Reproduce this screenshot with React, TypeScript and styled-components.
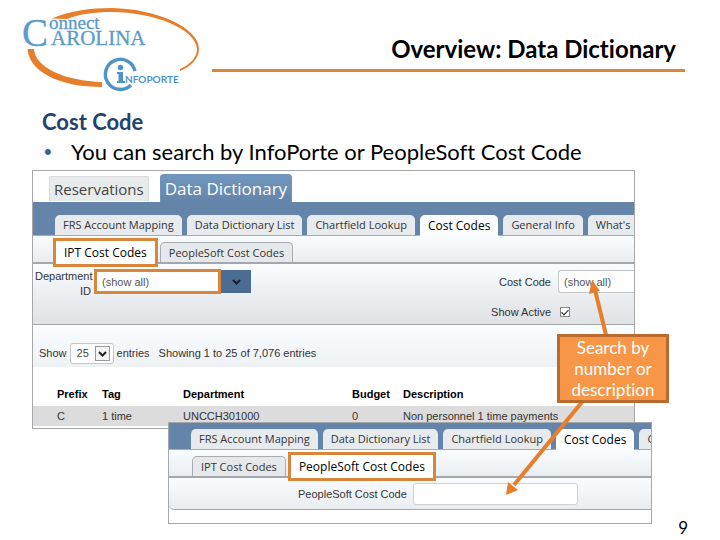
import React from "react";
import styled, { createGlobalStyle } from "styled-components";

const GlobalStyle = createGlobalStyle`
  * { box-sizing: border-box; }
  body {
    margin: 0;
    background: #fff;
    color: #000;
    font-family: Lato, "Liberation Sans", sans-serif;
    font-variant-ligatures: none;
  }
  button, input, select { font-family: inherit; }
`;

const ui = `"Liberation Sans", Arial, sans-serif`;
const tabFont = `"Open Sans", "Noto Sans", sans-serif`;
const orange = "#d9863a";
const steel = "#6484aa";

const Slide = styled.main`
  display: flex;
  flex-direction: column;
  min-height: 100vh;
  overflow: hidden;
`;

const Header = styled.header`
  display: flex;
  align-items: flex-start;
  padding: 0 35px 0 15px;
`;

const Logo = styled.svg`
  flex: none;
  width: 197px;
  height: 100px;
`;

const Title = styled.h1`
  flex: 1;
  margin: 32px 0 0;
  padding: 0 9px 3px 0;
  border-bottom: 3px solid ${orange};
  font-size: 24px;
  line-height: 34px;
  text-align: right;
  white-space: nowrap;
`;

const Intro = styled.section`
  padding: 7px 42px 4px;
  font-size: 22px;
  line-height: 30px;
`;

const Topic = styled.h2`
  margin: 0;
  font-size: 22px;
  line-height: 30px;
  color: #24426f;
`;

const Points = styled.ul`
  margin: 0;
  padding: 0;
  list-style: none;
  white-space: nowrap;
`;

const Point = styled.li`
  display: flex;
  &::before {
    content: "•";
    width: 27px;
    padding-left: 2px;
    color: #3c648c;
    font-family: ${ui};
  }
`;

const Stage = styled.section`
  position: relative;
  margin-top: -1px;
`;

const Shot = styled.section`
  position: relative;
  border: 1px solid #a6a8ac;
  background: #fff;
  overflow: hidden;
  font-family: ${ui};
  font-size: 11px;
  color: #333;
`;

const DictionaryShot = styled(Shot)`
  margin: 0 85px 0 32px;
  height: 259px;
`;

const PeopleSoftShot = styled(Shot)`
  margin: -7px 68px 0 168px;
  height: 102px;
`;

const ModuleTabs = styled.nav`
  display: flex;
  align-items: flex-end;
  gap: 11px;
  height: 31px;
  padding-left: 16px;
`;

const ModuleTab = styled.button<{ $active?: boolean }>`
  height: ${(p) => (p.$active ? 28 : 25)}px;
  margin-bottom: ${(p) => (p.$active ? 0 : 1)}px;
  padding: 0 4px;
  border: 1px solid ${(p) => (p.$active ? "#6f93b7" : "#d8dadc")};
  border-bottom: 0;
  border-radius: ${(p) => (p.$active ? "4px 4px 0 0" : "2px 2px 0 0")};
  background: ${(p) => (p.$active ? "linear-gradient(#7098be, #6484aa)" : "#e8ebec")};
  color: ${(p) => (p.$active ? "#fff" : "#444")};
  font-family: ${tabFont};
  font-size: ${(p) => (p.$active ? 17 : 15)}px;
  line-height: 24px;
  white-space: nowrap;
`;

const Band = styled.nav<{ $top: number }>`
  display: flex;
  gap: 5px;
  padding: ${(p) => p.$top}px 0 0 22px;
  background: ${steel};
  border-bottom: 1px solid #a6adb6;
`;

const Tab = styled.button<{ $active?: boolean }>`
  flex: none;
  height: ${(p) => (p.$active ? 21 : 20)}px;
  margin-bottom: ${(p) => (p.$active ? -1 : 0)}px;
  padding: 0 8px;
  border: 0;
  border-radius: 5px 5px 0 0;
  background: ${(p) => (p.$active ? "#fbfdff" : "#e7ebee")};
  color: ${(p) => (p.$active ? "#000" : "#333")};
  font-family: ${tabFont};
  font-size: ${(p) => (p.$active ? 12 : 11)}px;
  line-height: 20px;
  white-space: nowrap;
`;

const SubTabs = styled.nav<{ $inset: number }>`
  display: flex;
  align-items: flex-end;
  gap: 2px;
  height: 28px;
  padding-left: ${(p) => p.$inset}px;
  border-bottom: 2px solid #a4a8ad;
  background: linear-gradient(#fafdff, #e9edf0);
`;

const SubTab = styled.button<{ $marked?: boolean }>`
  position: relative;
  z-index: ${(p) => (p.$marked ? 1 : 0)};
  flex: none;
  height: ${(p) => (p.$marked ? 29 : 20)}px;
  margin-bottom: ${(p) => (p.$marked ? -5 : 0)}px;
  padding: 0 8px;
  border: ${(p) => (p.$marked ? `3px solid ${orange}` : "1px solid #a6adb3")};
  border-bottom-width: ${(p) => (p.$marked ? 3 : 0)}px;
  border-radius: ${(p) => (p.$marked ? "0" : "5px 5px 0 0")};
  background: ${(p) => (p.$marked ? "#fff" : "#e6e9eb")};
  color: ${(p) => (p.$marked ? "#000" : "#333")};
  font-family: ${tabFont};
  font-size: ${(p) => (p.$marked ? 12 : 11)}px;
  line-height: 20px;
  white-space: nowrap;
`;

const Filters = styled.form`
  display: flex;
  justify-content: space-between;
  height: 61px;
  padding: 5px 0 0 2px;
  border-bottom: 1px solid #a4a8ad;
  background: linear-gradient(#fafdff, #dfe1e4);
`;

const Department = styled.div`
  display: flex;
  align-items: flex-start;
`;

const DepartmentLabel = styled.label`
  width: 56px;
  margin-right: 3px;
  line-height: 15px;
  text-align: right;
`;

const DepartmentInput = styled.input`
  width: 127px;
  height: 25px;
  padding: 0 5px;
  border: 3px solid ${orange};
  background: #fff;
  color: #555;
  font-size: 11px;
`;

const DropButton = styled.button`
  display: grid;
  place-items: center;
  width: 30px;
  height: 23px;
  margin-top: 1px;
  padding: 0;
  border: 0;
  background: #4c6d93;
`;

const CodeFields = styled.div`
  display: grid;
  grid-template-columns: auto 76px;
  grid-template-rows: 23px 20px;
  align-items: center;
  align-content: start;
  gap: 9px 7px;
  padding-top: 1px;
  text-align: right;
`;

const CodeInput = styled.input`
  width: 100%;
  height: 23px;
  padding: 0 5px;
  border: 1px solid #c4c7ca;
  border-right: 0;
  border-radius: 3px 0 0 3px;
  background: #fff;
  color: #555;
  font-size: 11px;
`;

const Check = styled.input`
  appearance: none;
  width: 10px;
  height: 10px;
  margin: 0 0 0 2px;
  border: 1px solid #888;
  background: #fff;
  display: grid;
  place-items: center;
  &:checked::after {
    content: "";
    width: 3px;
    height: 6px;
    margin-bottom: 2px;
    border: solid #222;
    border-width: 0 1px 1px 0;
    transform: rotate(45deg);
  }
`;

const Paging = styled.div`
  display: flex;
  align-items: center;
  gap: 3px;
  height: 42px;
  padding: 14px 0 0 6px;
  background: linear-gradient(#fafdff, #eff2f5);
`;

const SelectBox = styled.span`
  position: relative;
  display: inline-flex;
`;

const PageSize = styled.select`
  appearance: none;
  width: 44px;
  height: 21px;
  padding: 0 6px;
  border: 1px solid #c4c7ca;
  border-radius: 3px;
  background: #fff;
  color: #444;
  font-size: 11px;
`;

const SelectArrow = styled.svg`
  position: absolute;
  right: 4px;
  top: 3px;
  width: 15px;
  height: 15px;
  pointer-events: none;
`;

const Summary = styled.span`
  margin-left: 6px;
`;

const Entries = styled.table`
  width: 100%;
  margin-top: 15px;
  border-collapse: collapse;
  table-layout: fixed;
  white-space: nowrap;
`;

const Head = styled.th<{ $w?: number }>`
  width: ${(p) => (p.$w ? `${p.$w}px` : "auto")};
  height: 24px;
  padding: 0;
  color: #000;
  text-align: left;
`;

const Cell = styled.td`
  height: 20px;
  padding: 0;
  background: #dcdcdc;
`;

const SoftForm = styled.form`
  display: flex;
  align-items: center;
  gap: 6px;
  height: 32px;
  padding-left: 129px;
  border-bottom: 1px solid #a4a8ad;
  border-radius: 5px 0 0 5px;
  background: linear-gradient(#fafdff, #e9edf0);
`;

const SoftInput = styled.input`
  width: 165px;
  height: 22px;
  padding: 0 5px;
  border: 1px solid #cfd2d5;
  border-radius: 3px;
  background: #fff;
`;

const Pointers = styled.svg`
  position: absolute;
  top: 110px;
  right: 51px;
  width: 169px;
  height: 218px;
  pointer-events: none;
`;

const Callout = styled.aside`
  position: absolute;
  top: 164px;
  right: 51px;
  width: 112px;
  padding: 0 10px;
  border: 3px solid #b86b2c;
  background: #f79646;
  color: #fff;
  font-size: 17px;
  line-height: 21px;
  text-align: center;
`;

const PageNumber = styled.footer`
  margin-top: -6px;
  padding-right: 32px;
  font-size: 17px;
  line-height: 20px;
  text-align: right;
`;

const bandTabs = ["FRS Account Mapping", "Data Dictionary List", "Chartfield Lookup", "Cost Codes", "General Info", "What's New"];

function BandTabs({ top }: { top: number }) {
  return (
    <Band $top={top}>
      {bandTabs.map((name) => (
        <Tab key={name} type="button" $active={name === "Cost Codes"}>{name}</Tab>
      ))}
    </Band>
  );
}

function BrandLogo() {
  return (
    <Logo viewBox="15 0 197 100" role="img" aria-label="Connect Carolina InfoPorte">
      <g fill="#e67e2b">
        <path d="M52 18.500 C68 11 91 8 112 8 C158 9 199 28 199 49 C199 58 192 66 180 71 L180 69 C191 64 197 57 197 49 C196 29 154 12 111 12 C94 12 80 14 67 19Z" />
        <path d="M27.500 49 H34 C35 68 66 81 102 82 V87 C58 87 29 71 27.500 49Z" />
      </g>
      <g fill="#5a9bcb" stroke="#5a9bcb" strokeWidth="0.300" fontFamily="'Liberation Serif', serif">
        <text x="22" y="46" fontSize="39">C</text>
        <text x="49" y="29" fontSize="19">onnect</text>
        <text x="51" y="45" fontSize="21">AROLINA</text>
      </g>
      <path d="M135 71 A15 15 0 1 0 131 85" fill="none" stroke="#4f94c8" strokeWidth="3.500" />
      <g fill="#4f94c8">
        <circle cx="120.500" cy="67.500" r="2.700" />
        <path d="M117 72 H123 V81 H125 V83 H117 V81 H118.500 V74 H117Z" />
        <text x="125" y="83" fontSize="10" fontFamily="Lato, sans-serif" fontWeight="700">NFOPORTE</text>
      </g>
    </Logo>
  );
}

export default function App() {
  return (
    <>
      <GlobalStyle />
      <Slide>
        <Header>
          <BrandLogo />
          <Title>Overview: Data Dictionary</Title>
        </Header>
        <Intro>
          <Topic>Cost Code</Topic>
          <Points>
            <Point>You can search by InfoPorte or PeopleSoft Cost Code</Point>
          </Points>
        </Intro>
        <Stage>
          <DictionaryShot>
            <ModuleTabs>
              <ModuleTab type="button">Reservations</ModuleTab>
              <ModuleTab type="button" $active>Data Dictionary</ModuleTab>
            </ModuleTabs>
            <BandTabs top={13} />
            <SubTabs $inset={20}>
              <SubTab type="button" $marked>IPT Cost Codes</SubTab>
              <SubTab type="button">PeopleSoft Cost Codes</SubTab>
            </SubTabs>
            <Filters>
              <Department>
                <DepartmentLabel htmlFor="department">Department ID</DepartmentLabel>
                <DepartmentInput id="department" defaultValue="(show all)" />
                <DropButton type="button" aria-label="Show departments">
                  <svg width="9" height="6" viewBox="0 0 9 6"><path d="M1 1 L4.500 4.500 L8 1" fill="none" stroke="#14202e" strokeWidth="2" /></svg>
                </DropButton>
              </Department>
              <CodeFields>
                <label htmlFor="code">Cost Code</label>
                <CodeInput id="code" defaultValue="(show all)" />
                <label htmlFor="active">Show Active</label>
                <Check id="active" type="checkbox" defaultChecked />
              </CodeFields>
            </Filters>
            <Paging>
              <label htmlFor="size">Show</label>
              <SelectBox>
                <PageSize id="size" defaultValue="25">
                  <option>25</option>
                </PageSize>
                <SelectArrow viewBox="0 0 15 15">
                  <rect x="0.500" y="0.500" width="14" height="14" fill="#f4f4f4" stroke="#999" />
                  <path d="M4 6 L7.500 9.500 L11 6" fill="none" stroke="#222" strokeWidth="2" />
                </SelectArrow>
              </SelectBox>
              <span>entries</span>
              <Summary>Showing 1 to 25 of 7,076 entries</Summary>
            </Paging>
            <Entries>
              <thead>
                <tr>
                  <Head $w={24} aria-hidden />
                  <Head $w={45}>Prefix</Head>
                  <Head $w={81}>Tag</Head>
                  <Head $w={169}>Department</Head>
                  <Head $w={51}>Budget</Head>
                  <Head>Description</Head>
                </tr>
              </thead>
              <tbody>
                <tr>
                  <Cell />
                  <Cell>C</Cell>
                  <Cell>1 time</Cell>
                  <Cell>UNCCH301000</Cell>
                  <Cell>0</Cell>
                  <Cell>Non personnel 1 time payments</Cell>
                </tr>
              </tbody>
            </Entries>
          </DictionaryShot>
          <PeopleSoftShot>
            <BandTabs top={6} />
            <SubTabs $inset={23}>
              <SubTab type="button">IPT Cost Codes</SubTab>
              <SubTab type="button" $marked>PeopleSoft Cost Codes</SubTab>
            </SubTabs>
            <SoftForm>
              <label htmlFor="softcode">PeopleSoft Cost Code</label>
              <SoftInput id="softcode" />
            </SoftForm>
          </PeopleSoftShot>
          <Pointers viewBox="500 280 169 218">
            <g stroke="#e67e2b" strokeWidth="4" fill="#e67e2b">
              <path d="M606 335 L595 290" />
              <path d="M582 402 L514 485" />
              <path d="M592 280 L600 291 L589 294Z" strokeWidth="0" />
              <path d="M506 495 L508 482 L518 490Z" strokeWidth="0" />
            </g>
          </Pointers>
          <Callout>Search by number or description</Callout>
        </Stage>
        <PageNumber>9</PageNumber>
      </Slide>
    </>
  );
}
